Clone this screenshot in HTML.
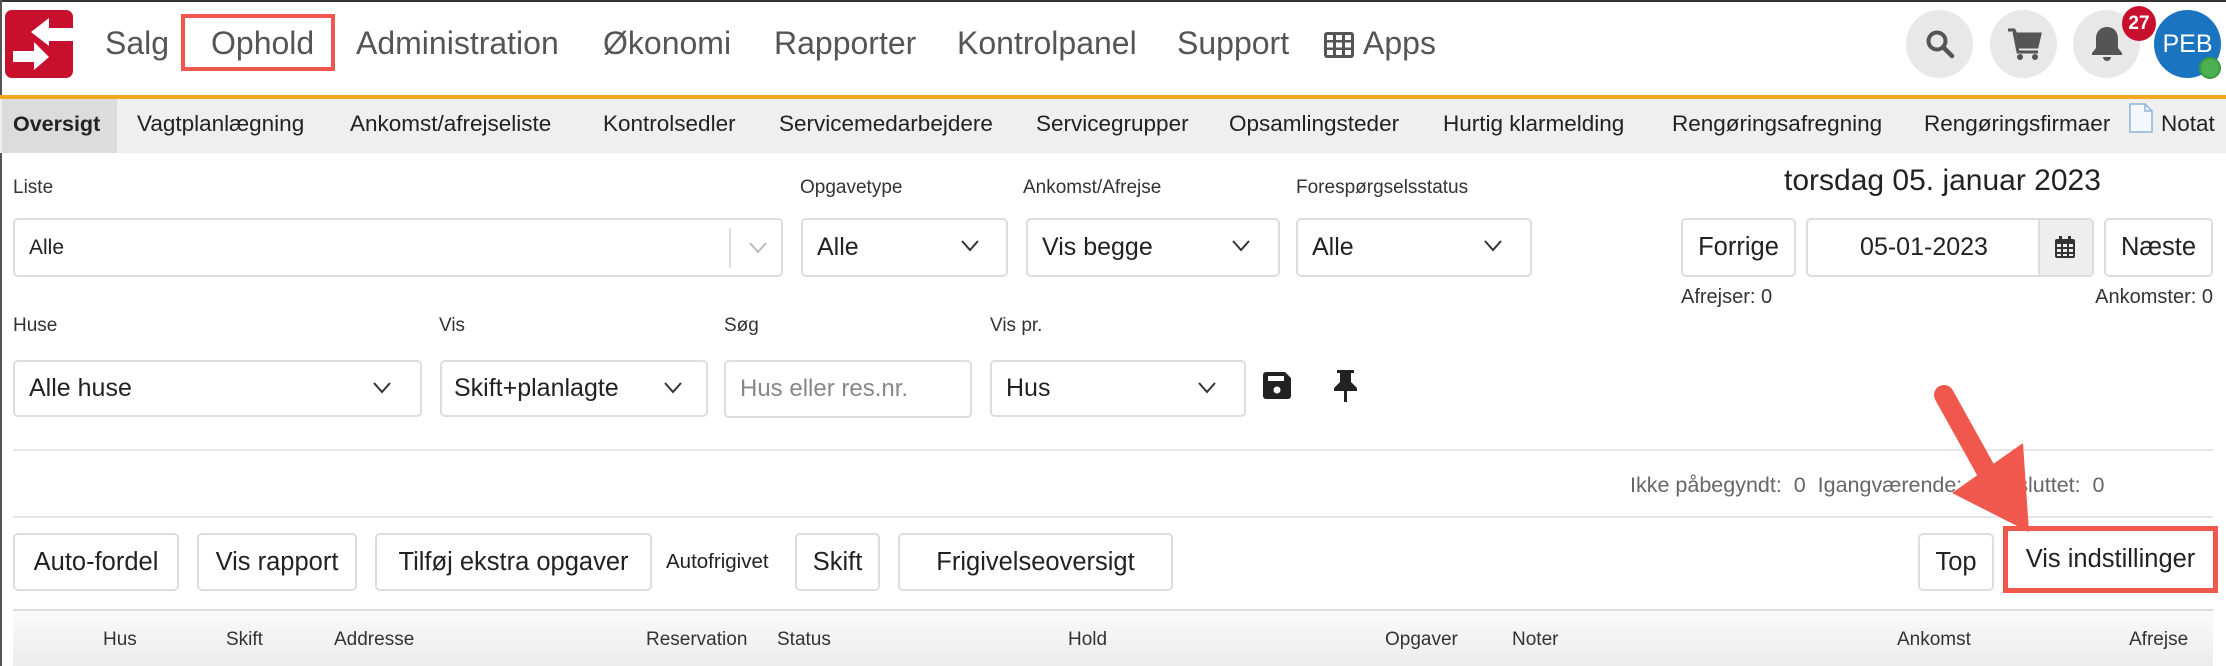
<!DOCTYPE html>
<html><head><meta charset="utf-8"><style>
*{box-sizing:border-box;margin:0;padding:0}
body{width:2226px;height:666px;overflow:hidden;background:#fff;font-family:"Liberation Sans",Arial,sans-serif;position:relative;color:#222}
.a{position:absolute;white-space:nowrap}
.nav{font-size:32px;color:#555;top:25px;line-height:36px}
.sub{font-size:22.5px;color:#222;top:111px;line-height:26px}
.lbl{font-size:19px;color:#333;line-height:24px}
.box{position:absolute;border:2px solid #ddd;border-radius:5px;background:#fff}
.sel{font-size:25px;color:#222;line-height:55px;padding-left:14px}
.chev{position:absolute;top:20px;width:18px;height:12px}
.btn{position:absolute;border:2px solid #ddd;border-radius:5px;background:#fff;font-size:25.5px;color:#222;text-align:center;line-height:54px}
.th{font-size:19px;color:#333;top:629px;line-height:22px}
.circ{position:absolute;top:10px;width:67px;height:68px;border-radius:50%;background:#e8e8e8}
</style></head><body>
<div class="a" style="left:0;top:0;width:2226px;height:2px;background:#333"></div>
<div class="a" style="left:0;top:0;width:2px;height:666px;background:#555"></div>
<svg class="a" style="left:5px;top:10px" width="68" height="68" viewBox="0 0 68 68">
<rect width="68" height="68" rx="7" fill="#c8102e"/>
<polygon points="26,22 44,8 44,18 68,18 68,31 44,31 44,36" fill="#fff"/>
<polygon points="8,41 29,41 29,32 44,47 29,60 29,52 8,52" fill="#fff"/>
</svg>
<div class="a nav" style="left:105px">Salg</div>
<div class="a" style="left:181px;top:14px;width:154px;height:57px;border:4px solid #f0584d"></div>
<div class="a nav" style="left:211px">Ophold</div>
<div class="a nav" style="left:356px">Administration</div>
<div class="a nav" style="left:603px">Økonomi</div>
<div class="a nav" style="left:774px">Rapporter</div>
<div class="a nav" style="left:957px">Kontrolpanel</div>
<div class="a nav" style="left:1177px">Support</div>
<svg class="a" style="left:1324px;top:32px" width="30" height="26" viewBox="0 0 30 26"><rect width="30" height="26" rx="3" fill="#555"/><g fill="#fff"><rect x="3" y="3" width="6" height="5"/><rect x="12" y="3" width="6" height="5"/><rect x="21" y="3" width="6" height="5"/><rect x="3" y="10.5" width="6" height="5"/><rect x="12" y="10.5" width="6" height="5"/><rect x="21" y="10.5" width="6" height="5"/><rect x="3" y="18" width="6" height="5"/><rect x="12" y="18" width="6" height="5"/><rect x="21" y="18" width="6" height="5"/></g></svg>
<div class="a nav" style="left:1363px">Apps</div>
<div class="circ" style="left:1906px"></div>
<svg class="a" style="left:1925px;top:29px" width="30" height="30" viewBox="0 0 30 30"><circle cx="12" cy="12" r="8.5" stroke="#555" stroke-width="4" fill="none"/><line x1="18" y1="18" x2="27" y2="27" stroke="#555" stroke-width="4.5" stroke-linecap="round"/></svg>
<div class="circ" style="left:1990px"></div>
<svg class="a" style="left:2006px;top:27px" width="36" height="34" viewBox="0 0 36 34"><path d="M2 3h6l2 4h24l-3 13H11L8 5" fill="none" stroke="#555" stroke-width="3"/><path d="M10 7h24l-3 13H12z" fill="#555"/><path d="M11 20l1 5h20" stroke="#555" stroke-width="3" fill="none"/><circle cx="14" cy="30" r="3" fill="#555"/><circle cx="29" cy="30" r="3" fill="#555"/></svg>
<div class="circ" style="left:2073px"></div>
<svg class="a" style="left:2090px;top:25px" width="34" height="38" viewBox="0 0 34 38"><path d="M17 2c-7 0-11 5-11 12v9l-4 5v2h30v-2l-4-5v-9C28 7 24 2 17 2z" fill="#555"/><path d="M13 32a4 4 0 0 0 8 0z" fill="#555"/></svg>
<div class="a" style="left:2154px;top:10px;width:67px;height:68px;border-radius:50%;background:#1a74c0;color:#fff;font-size:25px;text-align:center;line-height:68px">PEB</div>
<div class="a" style="left:2199px;top:57px;width:22px;height:22px;border-radius:50%;background:#4caf50;border:2px solid #3a9a40"></div>
<div class="a" style="left:2122px;top:6px;width:34px;height:35px;border-radius:50%;background:#c8102e;color:#fff;font-size:19px;font-weight:bold;text-align:center;line-height:35px">27</div>
<div class="a" style="left:0;top:95px;width:2226px;height:4px;background:#f5a623"></div>
<div class="a" style="left:0;top:99px;width:2226px;height:54px;background:#efefef"></div>
<div class="a" style="left:2px;top:99px;width:115px;height:54px;background:#dcdcdc"></div>
<div class="a sub" style="left:13px;font-weight:bold;font-size:21.5px">Oversigt</div>
<div class="a sub" style="left:137px">Vagtplanlægning</div>
<div class="a sub" style="left:350px">Ankomst/afrejseliste</div>
<div class="a sub" style="left:603px">Kontrolsedler</div>
<div class="a sub" style="left:779px">Servicemedarbejdere</div>
<div class="a sub" style="left:1036px">Servicegrupper</div>
<div class="a sub" style="left:1229px">Opsamlingsteder</div>
<div class="a sub" style="left:1443px">Hurtig klarmelding</div>
<div class="a sub" style="left:1672px">Rengøringsafregning</div>
<div class="a sub" style="left:1924px">Rengøringsfirmaer</div>
<svg class="a" style="left:2129px;top:103px" width="24" height="30" viewBox="0 0 24 30"><path d="M1 1h15l7 7v21H1z" fill="#f4f8fc" stroke="#8fb2d8" stroke-width="1.5"/><path d="M16 1v7h7" fill="none" stroke="#8fb2d8" stroke-width="1.5"/></svg>
<div class="a sub" style="left:2161px">Notat</div>
<div class="a lbl" style="left:13px;top:176px">Liste</div>
<div class="a lbl" style="left:800px;top:176px">Opgavetype</div>
<div class="a lbl" style="left:1023px;top:176px">Ankomst/Afrejse</div>
<div class="a lbl" style="left:1296px;top:176px">Forespørgselsstatus</div>
<div class="box sel" style="left:13px;top:218px;width:770px;height:59px;font-size:21px">Alle<div class="a" style="left:714px;top:8px;width:2px;height:40px;background:#ddd"></div><svg class="chev" style="left:734px;top:22px" viewBox="0 0 18 12"><path d="M1 1l8 9 8-9" fill="none" stroke="#bbb" stroke-width="2"/></svg></div>
<div class="box sel" style="left:801px;top:218px;width:207px;height:59px">Alle<svg class="chev" style="left:158px" viewBox="0 0 18 12"><path d="M1 1l8 9 8-9" fill="none" stroke="#333" stroke-width="2"/></svg></div>
<div class="box sel" style="left:1026px;top:218px;width:254px;height:59px">Vis begge<svg class="chev" style="left:204px" viewBox="0 0 18 12"><path d="M1 1l8 9 8-9" fill="none" stroke="#333" stroke-width="2"/></svg></div>
<div class="box sel" style="left:1296px;top:218px;width:236px;height:59px">Alle<svg class="chev" style="left:186px" viewBox="0 0 18 12"><path d="M1 1l8 9 8-9" fill="none" stroke="#333" stroke-width="2"/></svg></div>
<div class="a" style="left:1784px;top:164px;font-size:30px;color:#222;line-height:34px">torsdag 05. januar 2023</div>
<div class="btn" style="left:1681px;top:218px;width:115px;height:59px">Forrige</div>
<div class="box" style="left:1806px;top:218px;width:288px;height:59px;overflow:hidden"><div class="a" style="left:0;width:232px;text-align:center;font-size:25px;line-height:55px">05-01-2023</div><div class="a" style="left:230px;top:0;width:60px;height:59px;background:#eee;border-left:2px solid #ddd"></div><svg class="a" style="left:247px;top:16px" width="20" height="22" viewBox="0 0 20 22"><rect x="0" y="3" width="20" height="19" rx="2" fill="#333"/><rect x="4" y="0" width="3" height="6" fill="#333"/><rect x="13" y="0" width="3" height="6" fill="#333"/><g fill="#eee"><rect x="2" y="8" width="4" height="3"/><rect x="8" y="8" width="4" height="3"/><rect x="14" y="8" width="4" height="3"/><rect x="2" y="13" width="4" height="3"/><rect x="8" y="13" width="4" height="3"/><rect x="14" y="13" width="4" height="3"/><rect x="2" y="18" width="4" height="2"/><rect x="8" y="18" width="4" height="2"/><rect x="14" y="18" width="4" height="2"/></g></svg></div>
<div class="btn" style="left:2104px;top:218px;width:109px;height:59px">Næste</div>
<div class="a lbl" style="left:1681px;top:285px;font-size:20px">Afrejser: 0</div>
<div class="a lbl" style="left:2213px;top:285px;transform:translateX(-100%);font-size:20px">Ankomster: 0</div>
<div class="a lbl" style="left:13px;top:314px">Huse</div>
<div class="a lbl" style="left:439px;top:314px">Vis</div>
<div class="a lbl" style="left:724px;top:314px">Søg</div>
<div class="a lbl" style="left:990px;top:314px">Vis pr.</div>
<div class="box sel" style="left:13px;top:360px;width:409px;height:57px;line-height:53px">Alle huse<svg class="chev" style="left:358px" viewBox="0 0 18 12"><path d="M1 1l8 9 8-9" fill="none" stroke="#333" stroke-width="2"/></svg></div>
<div class="box sel" style="left:440px;top:360px;width:268px;height:57px;line-height:53px;padding-left:12px">Skift+planlagte<svg class="chev" style="left:222px" viewBox="0 0 18 12"><path d="M1 1l8 9 8-9" fill="none" stroke="#333" stroke-width="2"/></svg></div>
<div class="box sel" style="left:724px;top:360px;width:248px;height:58px;line-height:54px;color:#888;font-size:24px">Hus eller res.nr.</div>
<div class="box sel" style="left:990px;top:360px;width:256px;height:57px;line-height:53px">Hus<svg class="chev" style="left:206px" viewBox="0 0 18 12"><path d="M1 1l8 9 8-9" fill="none" stroke="#333" stroke-width="2"/></svg></div>
<svg class="a" style="left:1263px;top:372px" width="28" height="27" viewBox="0 0 28 27"><path d="M3 0h19l6 6v18a3 3 0 0 1-3 3H3a3 3 0 0 1-3-3V3a3 3 0 0 1 3-3z" fill="#222"/><rect x="5" y="4" width="16" height="5" fill="#fff"/><circle cx="14" cy="18" r="3.5" fill="#fff"/></svg>
<svg class="a" style="left:1333px;top:370px" width="25" height="32" viewBox="0 0 25 32"><path d="M4 0h17v3h-3v9l6 6v3H1v-3l6-6V3H4z" fill="#222"/><rect x="11" y="21" width="3" height="11" fill="#222"/></svg>
<div class="a" style="left:13px;top:449px;width:2200px;height:2px;background:#e6e6e6"></div>
<div class="a" style="left:1630px;top:472px;font-size:21.5px;color:#666;line-height:26px">Ikke påbegyndt:&nbsp; 0&nbsp; Igangværende:&nbsp; 0&nbsp; Afsluttet:&nbsp; 0</div>
<div class="a" style="left:13px;top:516px;width:2200px;height:2px;background:#e6e6e6"></div>
<div class="btn" style="left:13px;top:533px;width:166px;height:58px">Auto-fordel</div>
<div class="btn" style="left:197px;top:533px;width:160px;height:58px">Vis rapport</div>
<div class="btn" style="left:375px;top:533px;width:277px;height:58px">Tilføj ekstra opgaver</div>
<div class="a" style="left:666px;top:550px;font-size:20.5px;color:#222;line-height:24px">Autofrigivet</div>
<div class="btn" style="left:795px;top:533px;width:85px;height:58px">Skift</div>
<div class="btn" style="left:898px;top:533px;width:275px;height:58px">Frigivelseoversigt</div>
<div class="btn" style="left:1918px;top:533px;width:76px;height:58px">Top</div>
<div class="btn" style="left:2003px;top:526px;width:215px;height:67px;border:5px solid #f0584d;border-radius:0;line-height:57px">Vis indstillinger</div>
<div class="a" style="left:13px;top:609px;width:2200px;height:57px;border-top:2px solid #ddd;background:linear-gradient(#fafafa,#ececec)"></div>
<div class="a th" style="left:103px">Hus</div>
<div class="a th" style="left:226px">Skift</div>
<div class="a th" style="left:334px">Addresse</div>
<div class="a th" style="left:646px">Reservation</div>
<div class="a th" style="left:777px">Status</div>
<div class="a th" style="left:1068px">Hold</div>
<div class="a th" style="left:1385px">Opgaver</div>
<div class="a th" style="left:1512px">Noter</div>
<div class="a th" style="left:1897px">Ankomst</div>
<div class="a th" style="left:2129px">Afrejse</div>
<svg class="a" style="left:0;top:0" width="2226" height="666" viewBox="0 0 2226 666">
<line x1="1944" y1="395" x2="1994" y2="485" stroke="#f0584d" stroke-width="20" stroke-linecap="round"/>
<polygon points="2029,532 1952,493 2023,443" fill="#f0584d"/>
</svg>
</body></html>
